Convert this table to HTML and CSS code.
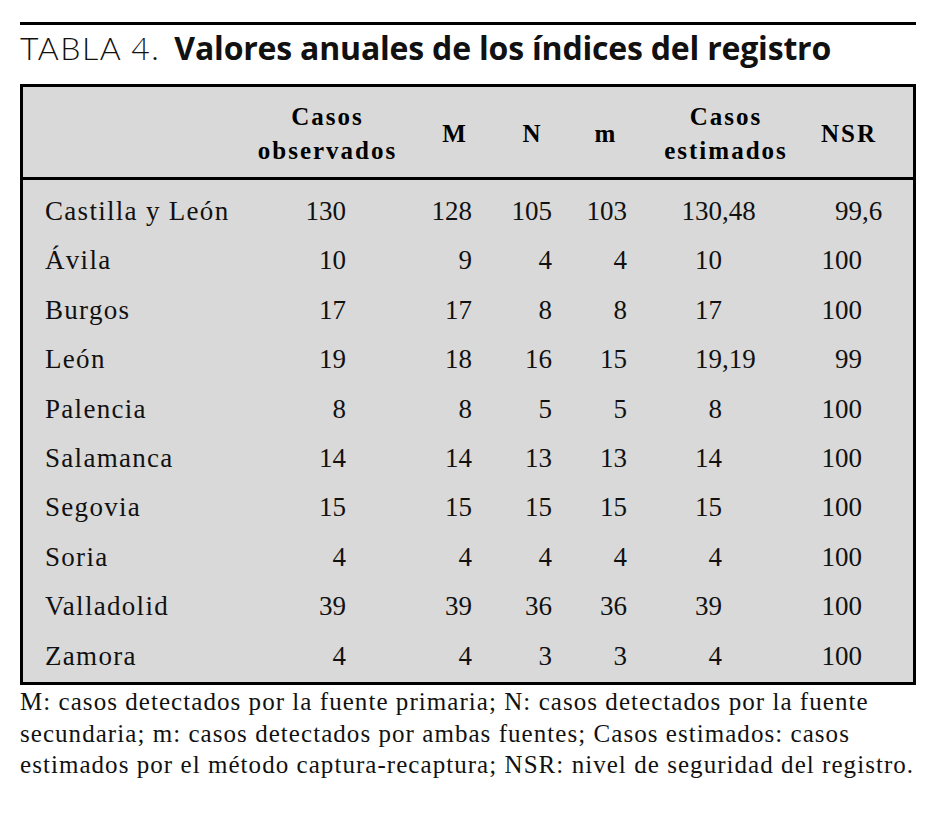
FILE: index.html
```html
<!DOCTYPE html>
<html lang="es">
<head>
<meta charset="utf-8">
<title>Tabla 4</title>
<link rel="stylesheet" href="styles.css">
</head>
<body>
<div class="page">
  <div class="rule"></div>
  <h1 class="title"><span class="label">TABLA 4.</span><span class="caption">Valores anuales de los índices del registro</span></h1>
  <table class="data">
    <colgroup>
      <col class="c-name"><col class="c-obs"><col class="c-m"><col class="c-n"><col class="c-mm"><col class="c-est"><col class="c-nsr"><col class="c-end">
    </colgroup>
    <thead>
      <tr>
        <th></th>
        <th class="two">Casos<br>observados</th>
        <th>M</th>
        <th>N</th>
        <th>m</th>
        <th class="two">Casos<br>estimados</th>
        <th>NSR</th>
        <th></th>
      </tr>
    </thead>
    <tbody>
      <tr><td class="name">Castilla y León</td><td class="num obs">130</td><td class="num m">128</td><td class="num n">105</td><td class="num mm">103</td><td class="num est"><span>130</span><span class="frac est-f">,48</span></td><td class="num nsr"><span>99</span><span class="frac nsr-f">,6</span></td><td></td></tr>
      <tr><td class="name">Ávila</td><td class="num obs">10</td><td class="num m">9</td><td class="num n">4</td><td class="num mm">4</td><td class="num est"><span>10</span><span class="frac est-f"></span></td><td class="num nsr"><span>100</span><span class="frac nsr-f"></span></td><td></td></tr>
      <tr><td class="name">Burgos</td><td class="num obs">17</td><td class="num m">17</td><td class="num n">8</td><td class="num mm">8</td><td class="num est"><span>17</span><span class="frac est-f"></span></td><td class="num nsr"><span>100</span><span class="frac nsr-f"></span></td><td></td></tr>
      <tr><td class="name">León</td><td class="num obs">19</td><td class="num m">18</td><td class="num n">16</td><td class="num mm">15</td><td class="num est"><span>19</span><span class="frac est-f">,19</span></td><td class="num nsr"><span>99</span><span class="frac nsr-f"></span></td><td></td></tr>
      <tr><td class="name">Palencia</td><td class="num obs">8</td><td class="num m">8</td><td class="num n">5</td><td class="num mm">5</td><td class="num est"><span>8</span><span class="frac est-f"></span></td><td class="num nsr"><span>100</span><span class="frac nsr-f"></span></td><td></td></tr>
      <tr><td class="name">Salamanca</td><td class="num obs">14</td><td class="num m">14</td><td class="num n">13</td><td class="num mm">13</td><td class="num est"><span>14</span><span class="frac est-f"></span></td><td class="num nsr"><span>100</span><span class="frac nsr-f"></span></td><td></td></tr>
      <tr><td class="name">Segovia</td><td class="num obs">15</td><td class="num m">15</td><td class="num n">15</td><td class="num mm">15</td><td class="num est"><span>15</span><span class="frac est-f"></span></td><td class="num nsr"><span>100</span><span class="frac nsr-f"></span></td><td></td></tr>
      <tr><td class="name">Soria</td><td class="num obs">4</td><td class="num m">4</td><td class="num n">4</td><td class="num mm">4</td><td class="num est"><span>4</span><span class="frac est-f"></span></td><td class="num nsr"><span>100</span><span class="frac nsr-f"></span></td><td></td></tr>
      <tr><td class="name">Valladolid</td><td class="num obs">39</td><td class="num m">39</td><td class="num n">36</td><td class="num mm">36</td><td class="num est"><span>39</span><span class="frac est-f"></span></td><td class="num nsr"><span>100</span><span class="frac nsr-f"></span></td><td></td></tr>
      <tr><td class="name">Zamora</td><td class="num obs">4</td><td class="num m">4</td><td class="num n">3</td><td class="num mm">3</td><td class="num est"><span>4</span><span class="frac est-f"></span></td><td class="num nsr"><span>100</span><span class="frac nsr-f"></span></td><td></td></tr>
    </tbody>
  </table>
  <p class="note">M: casos detectados por la fuente primaria; N: casos detectados por la fuente<br>secundaria; m: casos detectados por ambas fuentes; Casos estimados: casos<br>estimados por el método captura-recaptura; NSR: nivel de seguridad del registro.</p>
</div>
</body>
</html>
```
FILE: styles.css
```css
html, body {
  margin: 0;
  padding: 0;
  background: #ffffff;
}

.page {
  width: 896px;
  margin-left: 20px;
  padding-top: 22px;
  color: #111111;
  font-family: "Liberation Serif", "Times New Roman", serif;
}

.rule {
  height: 3px;
  background: #000000;
}

.title {
  margin: 3px 0 16px 0;
  height: 40px;
  line-height: 40px;
  font-size: 32px;
  font-weight: normal;
  white-space: nowrap;
}

.label {
  font-family: "Lato", "Open Sans", sans-serif;
  font-weight: 300;
  letter-spacing: 1.5px;
  margin-right: 14px;
}

.caption {
  font-family: "Open Sans", "Lato", sans-serif;
  font-weight: 700;
  letter-spacing: -0.2px;
}

.data {
  table-layout: fixed;
  border-collapse: separate;
  border-spacing: 0;
  border: 3px solid #000000;
  background: #d9d9d9;
}

.c-name { width: 227px; }
.c-obs  { width: 155px; }
.c-m    { width: 100px; }
.c-n    { width: 55px; }
.c-mm   { width: 92px; }
.c-est  { width: 148px; }
.c-nsr  { width: 98px; }
.c-end  { width: 15px; }

.data th {
  padding: 13px 0 9px 0;
  border-bottom: 3px solid #000000;
  font-size: 25px;
  line-height: 34px;
  font-weight: bold;
  letter-spacing: 2px;
  text-align: center;
  vertical-align: middle;
  color: #000000;
}

.data td {
  padding: 0;
  font-size: 27px;
  line-height: 49.4px;
  white-space: nowrap;
  vertical-align: baseline;
}

.data tbody tr:first-child td {
  padding-top: 7px;
}

.data tbody tr:last-child td {
  padding-bottom: 1px;
}

.data td.name {
  padding-left: 22px;
  letter-spacing: 1.3px;
  text-align: left;
}

.data td.num {
  text-align: right;
}

.data td.obs { padding-right: 59px; }
.data td.m   { padding-right: 33px; }
.data td.n   { padding-right: 8px; }
.data td.mm  { padding-right: 25px; }
.data td.est { padding-right: 38px; }
.data td.nsr { padding-right: 15px; }

.frac {
  display: inline-block;
  text-align: left;
}

.est-f { width: 40px; }
.nsr-f { width: 21px; }

.note {
  margin: 1px 0 0 0;
  font-size: 25px;
  line-height: 31.5px;
  letter-spacing: 1.05px;
  white-space: nowrap;
  color: #111111;
}
```
